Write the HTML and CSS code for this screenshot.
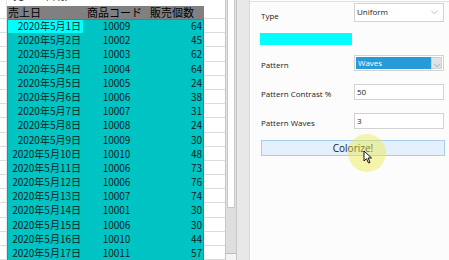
FILE: index.html
```html
<!DOCTYPE html>
<html lang="ja">
<head>
  <meta charset="UTF-8" />
  <title>Colorize</title>
  <link rel="stylesheet" href="styles.css">
</head>
<body>
  <div class="sheet">
    <div class="top">
      <div class="top-rh"></div>
      <div class="clip"><div class="title"><span>売上</span><span>日報</span></div></div>
    </div>
    <div class="row head">
      <div class="rh"></div>
      <div class="c a">売上日</div>
      <div class="c b">商品コード</div>
      <div class="c n">販売個数</div>
      <div class="c e"></div>
    </div>
    <div id="rows"></div>
  </div>

  <div class="scroll">
    <div class="thumb"></div>
    <div class="track"></div>
    <div class="arrow"></div>
  </div>
  <div class="gutter"></div>

  <div class="panel">
    <div class="field first">
      <label>Type</label>
      <div class="select">Uniform<span class="chev">⌵</span></div>
    </div>
    <div class="swatch"></div>
    <div class="field">
      <label>Pattern</label>
      <div class="select picked"><span class="sel-text">Waves</span><span class="chev-btn">⌵</span></div>
    </div>
    <div class="field">
      <label>Pattern Contrast %</label>
      <div class="input">50</div>
    </div>
    <div class="field">
      <label>Pattern Waves</label>
      <div class="input">3</div>
    </div>
    <button class="go">Colorize!</button>
    <div class="click">
      <svg width="10" height="14" viewBox="0 0 10 14"><path d="M1 1 L1 11 L3.5 8.7 L5.5 13 L7 12.3 L5 8 L8.5 8 Z" fill="#fff" stroke="#111" stroke-width="1"/></svg>
    </div>
  </div>

  <script>
    const data = [
      [1, '10009', 64], [2, '10002', 45], [3, '10003', 62], [4, '10004', 64],
      [5, '10005', 24], [6, '10006', 38], [7, '10007', 31], [8, '10008', 24],
      [9, '10009', 30], [10, '10010', 48], [11, '10006', 73], [12, '10006', 76],
      [13, '10007', 74], [14, '10001', 30], [15, '10006', 30], [16, '10010', 44],
      [17, '10011', 57]
    ];
    const rows = document.getElementById('rows');
    data.forEach((d, i) => {
      const div = document.createElement('div');
      div.className = 'row data' + (i === 0 ? ' first' : '');
      div.innerHTML = '<div class="rh"></div>' +
        '<div class="c a' + (i === 0 ? ' active' : '') + '">2020年5月' + d[0] + '日</div>' +
        '<div class="c b">' + d[1] + '</div>' +
        '<div class="c n">' + d[2] + '</div>' +
        '<div class="c e"></div>';
      rows.appendChild(div);
    });
  </script>
</body>
</html>
```

FILE: styles.css
```css
body {
  margin: 0;
  width: 449px;
  height: 260px;
  overflow: hidden;
  display: flex;
  background: #fcfcfc;
  font-family: "Noto Sans CJK JP", "Noto Sans", sans-serif;
}
.sheet {
  width: 225px;
  flex: none;
  background: #fff;
  overflow: hidden;
}
.top {
  display: flex;
  height: 6px;
}
.top-rh {
  width: 7px;
  border-right: 1px solid #e4e4e4;
  box-sizing: border-box;
}
.clip {
  flex: 1;
  height: 6px;
  overflow: hidden;
}
.title {
  font-size: 11px;
  line-height: 11px;
  margin-top: -10px;
  padding-left: 6px;
  color: #111;
  display: flex;
  gap: 10px;
}
.row {
  display: grid;
  grid-template-columns: 7px 76px 67px 54px 21px;
  height: 14.2px;
}
.row .rh {
  border-bottom: 1px solid #dcdcdc;
  border-right: 1px solid #e4e4e4;
}
.row.head {
  height: 13px;
}
.c {
  font-size: 10px;
  line-height: 14px;
  color: #0c1c1c;
  white-space: nowrap;
  overflow: hidden;
}
.head .c {
  background: #808080;
  font-size: 11px;
  line-height: 13px;
  color: #000;
}
.head .c.e {
  background: #fff;
  border-bottom: 1px solid #dcdcdc;
}
.head .a { padding-left: 1px; }
.head .b { padding-left: 4px; }
.data .c {
  background: #00c3c3;
}
.data .a {
  text-align: right;
  padding-right: 2px;
  box-shadow: inset 1px 0 #3f8f63;
}
.data .a.active {
  background: #00ffff;
  box-shadow: inset 1px 0 #3f8f63, inset 0 1px #3f8f63;
}
.data .b {
  text-align: center;
}
.data .n {
  text-align: right;
  padding-right: 2px;
  box-shadow: inset -1px 0 #3f8f63;
}
.data.first .b { box-shadow: inset 0 1px #3f8f63; }
.data.first .n { box-shadow: inset -1px 0 #3f8f63, inset 0 1px #3f8f63; }
.data .c.e {
  background: #fff;
  border-bottom: 1px solid #dcdcdc;
}
.scroll {
  width: 12px;
  flex: none;
  display: flex;
  flex-direction: column;
  border-left: 1px solid #c6c6c6;
  border-right: 1px solid #c6c6c6;
  box-sizing: border-box;
  background: #e2e2e2;
}
.thumb {
  height: 207px;
  margin: 0 1px;
  background: #fff;
  border: 1px solid #c8c8c8;
  border-top: none;
}
.track {
  flex: 1;
  background: #dedede;
}
.arrow {
  height: 6px;
  background: #f4f4f4;
  border-top: 1px solid #bbb;
}
.gutter {
  width: 12px;
  flex: none;
  background: #e8e8e8;
  border-right: 1px solid #d8d8d8;
}
.panel {
  flex: 1;
  position: relative;
  padding: 1px 0 0 11px;
  border-top: 1px solid #e0e0e0;
  margin-top: 1px;
  font-family: "Open Sans", "Noto Sans", sans-serif;
  color: #222;
}
.field {
  display: grid;
  grid-template-columns: 93px 90px;
  align-items: center;
  height: 16px;
  margin-top: 13px;
}
.field.first {
  height: 19px;
  margin-top: 0;
}
.field label {
  font-size: 8px;
  padding-top: 2px;
}
.field.first label {
  padding-top: 5px;
}
.select, .input {
  height: 16px;
  box-sizing: border-box;
  border: 1px solid #d2d2d2;
  background: #fff;
  font-size: 8px;
  line-height: 14px;
  padding-left: 2px;
  position: relative;
}
.field.first .select {
  height: 19px;
  line-height: 16px;
}
.chev {
  position: absolute;
  right: 5px;
  top: -1px;
  color: #888;
  font-size: 9px;
}
.swatch {
  width: 92px;
  height: 12px;
  background: #00ffff;
  margin: 11px 0 0 -1px;
}
.swatch + .field {
  margin-top: 10px;
}
.picked {
  display: flex;
  padding: 1px;
}
.sel-text {
  flex: 1;
  background: #279bd8;
  color: #fff;
  line-height: 12px;
  padding-left: 2px;
}
.chev-btn {
  width: 11px;
  background: #e2e2e2;
  border: 1px solid #cfcfcf;
  box-sizing: border-box;
  color: #777;
  font-size: 8px;
  line-height: 11px;
  text-align: center;
}
.go {
  display: block;
  width: 184px;
  height: 16px;
  margin-top: 11px;
  padding: 0;
  border: 1px solid #a9cdee;
  background: #e4f0fb;
  font-family: "Open Sans", "Noto Sans", sans-serif;
  font-size: 10px;
  line-height: 13px;
  color: #222;
}
.click {
  position: absolute;
  left: 98px;
  top: 132px;
  width: 38px;
  height: 38px;
  border-radius: 50%;
  background: rgba(235, 235, 70, 0.45);
  display: flex;
  align-items: center;
  justify-content: center;
}
.click svg {
  margin: 8px 0 0 1px;
}
```
